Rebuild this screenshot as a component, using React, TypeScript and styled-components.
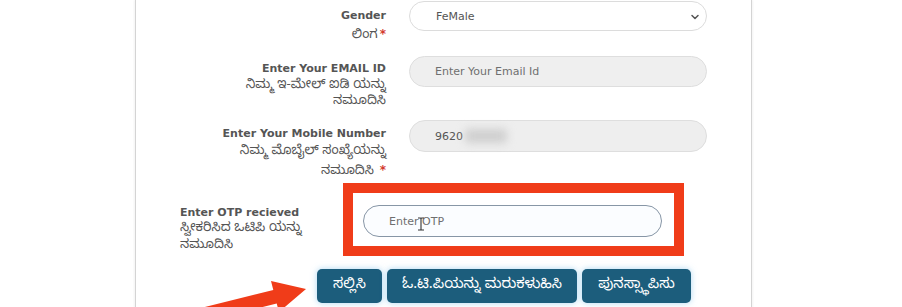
import styled, { createGlobalStyle } from 'styled-components';
import { ChevronDown } from 'lucide-react';

const GlobalStyle = createGlobalStyle`
    html, body {
        margin: 0;
        padding: 0;
        background: #ffffff;
        overflow: hidden;
    }
`;

const latin = `"DejaVu Sans", Verdana, sans-serif`;
const kannada = `"Noto Sans Kannada", "Noto Sans", "DejaVu Sans", sans-serif`;

const Page = styled.div`
    position: relative;
    width: 902px;
    height: 307px;
    overflow: hidden;
`;

const Panel = styled.div`
    margin-left: 135px;
    width: 615px;
    height: 307px;
    border-left: 1px solid #d4d4d4;
    border-right: 1px solid #d4d4d4;
    box-shadow: -1px 0 2px rgba(0, 0, 0, 0.05), 1px 0 2px rgba(0, 0, 0, 0.05);
    background: #fff;
    padding-top: 1px;
    box-sizing: content-box;
`;

const Row = styled.div<{ $h: number; $pad: number }>`
    display: grid;
    grid-template-columns: 250px 298px;
    column-gap: 23px;
    align-items: start;
    height: ${p => p.$h}px;
    & > label {
        padding-top: ${p => p.$pad}px;
    }
`;

const Label = styled.label<{ $lh?: number }>`
    text-align: right;
    color: #555;
    font-size: 11px;
    line-height: ${p => p.$lh ?? 17}px;
`;

const En = styled.div`
    font-family: ${latin};
    font-weight: bold;
    font-size: 11px;
`;

const Kn = styled.div`
    font-family: ${kannada};
    font-size: 13px;
`;

const Star = styled.span`
    color: #d33a2c;
    font-family: ${latin};
    font-weight: bold;
    font-size: 12px;
    margin-left: 2px;
`;

const SelectWrap = styled.div`
    position: relative;
    height: 30px;
`;

const Select = styled.select`
    appearance: none;
    width: 100%;
    height: 30px;
    box-sizing: border-box;
    border: 1px solid #dcdcdc;
    border-radius: 15px;
    background: #fff;
    padding: 0 0 0 26px;
    font-family: ${latin};
    font-size: 11px;
    color: #555;
    outline: none;
`;

const Chevron = styled(ChevronDown)`
    position: absolute;
    right: 6px;
    top: 10px;
    color: #555;
    pointer-events: none;
`;

const Field = styled.div`
    position: relative;
`;

const Input = styled.input<{ $bg?: string; $border?: string; $h?: number }>`
    display: block;
    width: 100%;
    height: ${p => p.$h ?? 31}px;
    box-sizing: border-box;
    border: ${p => p.$border ?? '1px solid #dedede'};
    border-radius: 16px;
    background: ${p => p.$bg ?? '#efefef'};
    padding: 0 0 0 25px;
    font-family: ${latin};
    font-size: 11px;
    color: #555;
    outline: none;
    &::placeholder {
        color: #6f6f6f;
    }
`;

const Blur = styled.span`
    position: absolute;
    left: 56px;
    top: 9px;
    width: 42px;
    height: 14px;
    background: #cfcfcf;
    filter: blur(4px);
    border-radius: 4px;
`;

const OtpRow = styled.div`
    display: flex;
    align-items: flex-start;
    height: 86px;
    padding-left: 44px;
`;

const OtpLabel = styled.label`
    width: 163px;
    padding-top: 21px;
    color: #555;
    line-height: 17px;
`;

const Highlight = styled.div`
    width: 299px;
    border: 10px solid #f03c19;
    padding: 12px 12px 9px 10px;
    background: #fff;
`;

const Cursor = styled.svg`
    position: absolute;
    left: 54px;
    top: 12px;
`;

const Buttons = styled.div`
    display: flex;
    gap: 5px;
    padding-left: 181px;
`;

const Button = styled.button<{ $w: number }>`
    width: ${p => p.$w}px;
    height: 34px;
    border: none;
    border-radius: 5px;
    background: #1c5d7c;
    color: #fff;
    font-family: ${kannada};
    font-size: 14.5px;
    padding: 0;
    box-shadow: 0 0 6px rgba(120, 190, 235, 0.6);
    cursor: pointer;
`;

const Arrow = styled.svg`
    position: absolute;
    left: 190px;
    top: 270px;
`;

export default function App() {
    return (
        <Page>
            <GlobalStyle />
            <Panel>
                <Row $h={55} $pad={5}>
                    <Label $lh={19}>
                        <En>Gender</En>
                        <Kn>ಲಿಂಗ<Star>*</Star></Kn>
                    </Label>
                    <SelectWrap>
                        <Select defaultValue="FeMale">
                            <option>Male</option>
                            <option>FeMale</option>
                        </Select>
                        <Chevron size={12} strokeWidth={3} />
                    </SelectWrap>
                </Row>
                <Row $h={64} $pad={5}>
                    <Label $lh={16.5}>
                        <En>Enter Your EMAIL ID</En>
                        <Kn>ನಿಮ್ಮ ಇ-ಮೇಲ್ ಐಡಿ ಯನ್ನು</Kn>
                        <Kn>ನಮೂದಿಸಿ</Kn>
                    </Label>
                    <Input placeholder="Enter Your Email Id" />
                </Row>
                <Row $h={63} $pad={5}>
                    <Label $lh={18}>
                        <En>Enter Your Mobile Number</En>
                        <Kn>ನಿಮ್ಮ ಮೊಬೈಲ್ ಸಂಖ್ಯೆಯನ್ನು</Kn>
                        <Kn>ನಮೂದಿಸಿ <Star>*</Star></Kn>
                    </Label>
                    <Field>
                        <Input $h={32} $bg="#eeeeee" defaultValue="9620" readOnly />
                        <Blur />
                    </Field>
                </Row>
                <OtpRow>
                    <OtpLabel>
                        <En>Enter OTP recieved</En>
                        <Kn>ಸ್ವೀಕರಿಸಿದ ಒಟಿಪಿ ಯನ್ನು</Kn>
                        <Kn>ನಮೂದಿಸಿ</Kn>
                    </OtpLabel>
                    <Highlight>
                        <Field>
                            <Input $h={32} $bg="#fbfdff" $border="1.5px solid #8796a6" placeholder="Enter OTP" />
                            <Cursor width="8" height="14" viewBox="0 0 8 14">
                                <path d="M1 1h2.2c.5 0 .8.3.8.8M7 1H4.8c-.5 0-.8.3-.8.8v10.4c0 .5-.3.8-.8.8H1M7 13H4.8c-.5 0-.8-.3-.8-.8" stroke="#333" strokeWidth="1.1" fill="none" />
                            </Cursor>
                        </Field>
                    </Highlight>
                </OtpRow>
                <Buttons>
                    <Button $w={65}>ಸಲ್ಲಿಸಿ</Button>
                    <Button $w={190}>ಓ.ಟಿ.ಪಿಯನ್ನು ಮರುಕಳುಹಿಸಿ</Button>
                    <Button $w={109}>ಪುನಸ್ಸ್ಥಾಪಿಸು</Button>
                </Buttons>
            </Panel>
            <Arrow width="130" height="37" viewBox="0 0 130 37">
                <polygon
                    points="116,19 81,11 83.3,19.9 5.7,39.3 9.1,52.9 86.7,33.5 89,42"
                    fill="#f03c19"
                />
            </Arrow>
        </Page>
    );
}
